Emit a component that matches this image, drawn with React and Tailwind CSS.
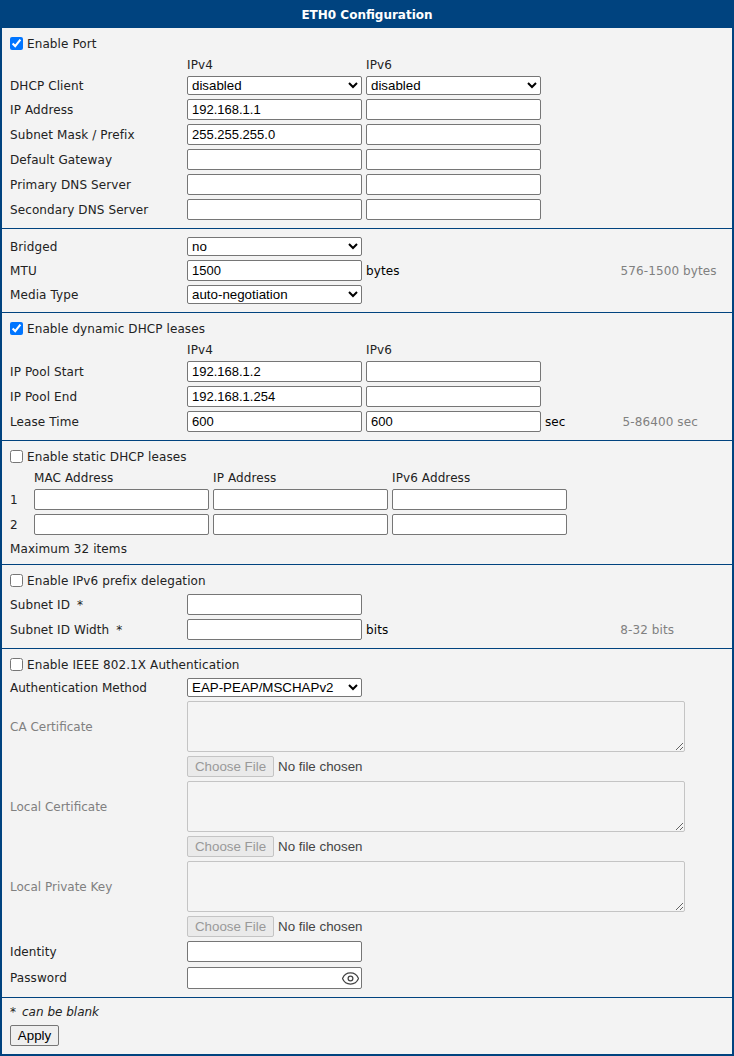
import React from "react";
import { Eye } from "lucide-react";

const inputCls =
  "block w-[175px] h-[21px] shrink-0 bg-white border border-[#767676] rounded-[2px] px-[4px] text-[13px] tracking-normal font-['Liberation_Sans',sans-serif] text-black outline-none";
const selectCls =
  "block w-[175px] h-[19px] shrink-0 bg-white border border-[#767676] rounded-[2px] text-[13.33px] tracking-normal font-['Liberation_Sans',sans-serif] text-black outline-none";

function Input({ value = "", className = "" }) {
  return <input type="text" defaultValue={value} className={`${inputCls} ${className}`} />;
}

function Select({ value }) {
  return (
    <select defaultValue={value} className={selectCls}>
      <option>{value}</option>
    </select>
  );
}

function Check({ label, checked = false }) {
  return (
    <label className="flex items-center h-[15px]">
      <input type="checkbox" defaultChecked={checked} className="w-[13px] h-[13px] m-0 mr-[4px] accent-[#0075ff]" />
      {label}
    </label>
  );
}

function Row({ label, muted = false, children, mt = "mt-[4px]" }) {
  return (
    <div className={`flex items-center ${mt}`}>
      <div className={`w-[177px] shrink-0 ${muted ? "text-[#808080] tracking-normal" : ""}`}>{label}</div>
      <div className="flex items-center gap-[4px]">{children}</div>
    </div>
  );
}

function Unit({ children, hint, hintClass }) {
  return (
    <>
      <span className="text-black">{children}</span>
      <span className={`text-[#808080] ${hintClass}`}>{hint}</span>
    </>
  );
}

function Heads({ mt }) {
  return (
    <div className={`flex h-[15px] items-center pl-[177px] gap-[4px] ${mt}`}>
      <div className="w-[175px]">IPv4</div>
      <div className="w-[175px]">IPv6</div>
    </div>
  );
}

function FileCert({ label }) {
  return (
    <>
      <Row label={label} muted>
        <textarea disabled className="block w-[498px] h-[51px] bg-[#f4f4f4] border border-[#c4c4c4] rounded-[2px]" />
      </Row>
      <div className="flex items-center mt-[4px] pl-[177px] h-[21px] text-[13.33px] tracking-normal font-['Liberation_Sans',sans-serif] text-[#444]">
        <button disabled className="w-[87px] h-[21px] bg-[#eaeaea] border border-[#c4c4c4] rounded-[2px] text-[#999] mr-[4px]">
          Choose File
        </button>
        No file chosen
      </div>
    </>
  );
}

function Section({ children, className = "" }) {
  return <section className={`border-b border-[#00437f] px-[8px] ${className}`}>{children}</section>;
}

function Blankable({ text }) {
  return (
    <>
      {text} <span className="ml-[3px]">*</span>
    </>
  );
}

export default function App() {
  return (
    <div className="w-[734px] h-[1056px] border-x-2 border-b-2 border-[#00437f] bg-[#f3f3f3] text-[12px] tracking-[0.1px] text-[#222] font-['DejaVu_Sans',Verdana,sans-serif] overflow-hidden">
      <div className="h-[28px] -mx-[2px] bg-[#00437f] text-white font-bold tracking-normal text-center leading-[30px]">ETH0 Configuration</div>

      <Section className="h-[201px] pt-[8px]">
        <Check label="Enable Port" checked />
        <Heads mt="mt-[6px]" />
        <Row label="DHCP Client" mt="mt-[4px]">
          <Select value="disabled" />
          <Select value="disabled" />
        </Row>
        <Row label="IP Address">
          <Input value="192.168.1.1" />
          <Input />
        </Row>
        <Row label="Subnet Mask / Prefix">
          <Input value="255.255.255.0" />
          <Input />
        </Row>
        <Row label="Default Gateway">
          <Input />
          <Input />
        </Row>
        <Row label="Primary DNS Server">
          <Input />
          <Input />
        </Row>
        <Row label="Secondary DNS Server">
          <Input />
          <Input />
        </Row>
      </Section>

      <Section className="h-[84px] pt-[8px]">
        <Row label="Bridged" mt="mt-0">
          <Select value="no" />
        </Row>
        <Row label="MTU">
          <Input value="1500" />
          <Unit hint="576-1500 bytes" hintClass="ml-[217px]">bytes</Unit>
        </Row>
        <Row label="Media Type">
          <Select value="auto-negotiation" />
        </Row>
      </Section>

      <Section className="h-[128px] pt-[8px]">
        <Check label="Enable dynamic DHCP leases" checked />
        <Heads mt="mt-[6px]" />
        <Row label="IP Pool Start" mt="mt-[4px]">
          <Input value="192.168.1.2" />
          <Input />
        </Row>
        <Row label="IP Pool End">
          <Input value="192.168.1.254" />
          <Input />
        </Row>
        <Row label="Lease Time">
          <Input value="600" />
          <Input value="600" />
          <Unit hint="5-86400 sec" hintClass="ml-[53px]">sec</Unit>
        </Row>
      </Section>

      <Section className="h-[124px] pt-[8px]">
        <Check label="Enable static DHCP leases" />
        <div className="flex h-[15px] items-center mt-[6px] pl-[24px] gap-[4px]">
          <div className="w-[175px]">MAC Address</div>
          <div className="w-[175px]">IP Address</div>
          <div className="w-[175px]">IPv6 Address</div>
        </div>
        {["1", "2"].map((n) => (
          <div key={n} className="flex items-center gap-[4px] mt-[4px]">
            <div className="w-[20px]">{n}</div>
            <Input />
            <Input />
            <Input />
          </div>
        ))}
        <div className="mt-[7px] h-[15px] leading-[15px]">Maximum 32 items</div>
      </Section>

      <Section className="h-[84px] pt-[8px]">
        <Check label="Enable IPv6 prefix delegation" />
        <Row label={<Blankable text="Subnet ID" />} mt="mt-[6px]">
          <Input />
        </Row>
        <Row label={<Blankable text="Subnet ID Width" />}>
          <Input />
          <Unit hint="8-32 bits" hintClass="ml-[228px]">bits</Unit>
        </Row>
      </Section>

      <Section className="h-[349px] pt-[8px]">
        <Check label="Enable IEEE 802.1X Authentication" />
        <Row label={<span className="tracking-normal">Authentication Method</span>} mt="mt-[6px]">
          <Select value="EAP-PEAP/MSCHAPv2" />
        </Row>
        <FileCert label="CA Certificate" />
        <FileCert label="Local Certificate" />
        <FileCert label="Local Private Key" />
        <Row label="Identity">
          <Input />
        </Row>
        <Row label="Password" mt="mt-[5px]">
          <div className="relative">
            <Input className="h-[22px]" />
            <Eye size={19} strokeWidth={1.6} className="absolute right-[2px] top-[1.5px] text-[#444]" />
          </div>
        </Row>
      </Section>

      <div className="px-[8px] pt-[7px]">
        <div className="h-[15px] leading-[15px]">
          * <i className="ml-[2px] tracking-normal">can be blank</i>
        </div>
        <button className="block mt-[5px] w-[49px] h-[21px] bg-[#efefef] border border-[#767676] rounded-[2px] text-[13.33px] tracking-normal text-black font-['Liberation_Sans',sans-serif]">
          Apply
        </button>
      </div>
    </div>
  );
}
